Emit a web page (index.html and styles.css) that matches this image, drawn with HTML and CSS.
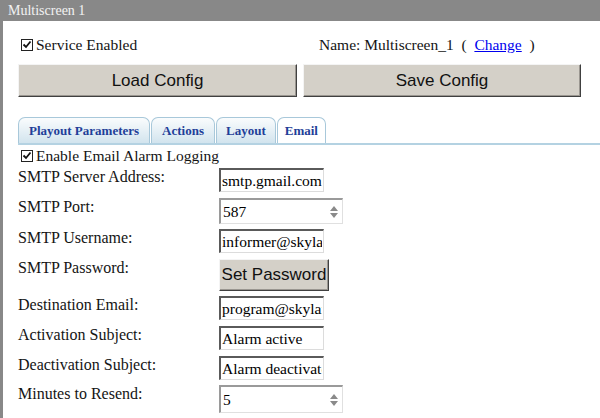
FILE: index.html
```html
<!DOCTYPE html>
<html lang="en">
<head>
    <meta charset="UTF-8">
    <title>Multiscreen 1</title>
    <link rel="stylesheet" href="styles.css">
</head>
<body>
    <div class="titlebar">Multiscreen 1</div>

    <div class="panel">
        <div class="top">
            <label class="check">
                <span class="box"><svg width="10" height="10" viewBox="0 0 10 10"><path d="M1.5 4.5 L4 7 L8.5 1.5" fill="none" stroke="#111" stroke-width="1.8"/></svg></span>
                Service Enabled
            </label>
            <div class="name">Name: Multiscreen_1 &nbsp;(&nbsp; <a href="#">Change</a> &nbsp;)</div>
            <button class="btn big">Load Config</button>
            <button class="btn big">Save Config</button>
        </div>

        <div class="tabs">
            <div class="tab">Playout Parameters</div>
            <div class="tab">Actions</div>
            <div class="tab narrow">Layout</div>
            <div class="tab active">Email</div>
        </div>

        <label class="check small">
            <span class="box"><svg width="10" height="10" viewBox="0 0 10 10"><path d="M1.5 4.5 L4 7 L8.5 1.5" fill="none" stroke="#111" stroke-width="1.8"/></svg></span>
            Enable Email Alarm Logging
        </label>

        <div class="form">
            <label for="server">SMTP Server Address:</label>
            <input type="text" id="server" value="smtp.gmail.com">

            <label>SMTP Port:</label>
            <div class="spin">
                <span>587</span>
                <svg width="8" height="12" viewBox="0 0 8 12"><path d="M4 0 L8 5 L0 5 Z M0 7 L8 7 L4 12 Z" fill="#8a8a8a"/></svg>
            </div>

            <label for="user">SMTP Username:</label>
            <input type="text" id="user" value="informer@skylark.tv">

            <label>SMTP Password:</label>
            <div><button class="btn pass">Set Password</button></div>

            <label for="dest">Destination Email:</label>
            <input type="text" id="dest" value="program@skylark.tv">

            <label for="act">Activation Subject:</label>
            <input type="text" id="act" value="Alarm active">

            <label for="deact">Deactivation Subject:</label>
            <input type="text" id="deact" value="Alarm deactivated">

            <label>Minutes to Resend:</label>
            <div class="spin tall">
                <span>5</span>
                <svg width="8" height="12" viewBox="0 0 8 12"><path d="M4 0 L8 5 L0 5 Z M0 7 L8 7 L4 12 Z" fill="#8a8a8a"/></svg>
            </div>
        </div>
    </div>
</body>
</html>
```

FILE: styles.css
```css
body {
    margin: 0;
    font-family: "Liberation Serif", serif;
    font-size: 15.5px;
    color: #141414;
    background: #fff;
}

.titlebar {
    height: 21px;
    line-height: 21px;
    padding-left: 8px;
    background-color: #888;
    color: #f2f2f2;
    font-size: 14px;
}

.panel {
    border-left: 3px solid #888;
    padding-left: 15px;
    height: 397px;
}

.top {
    display: grid;
    grid-template-columns: 279px 278px;
    grid-template-rows: 18px 33px;
    column-gap: 6px;
    row-gap: 10px;
    padding-top: 15px;
}

.check {
    display: flex;
    align-items: center;
    gap: 3px;
    padding-left: 3px;
    line-height: 18px;
}

.box {
    display: inline-flex;
    align-items: center;
    justify-content: center;
    width: 10px;
    height: 10px;
    border: 1px solid #222;
    background: #fff;
}

.name {
    padding-left: 16px;
    line-height: 18px;
}

.name a {
    color: #0000ee;
}

.btn {
    font-family: "Liberation Sans", Arial, sans-serif;
    font-size: 17px;
    color: #111;
    background-color: #d4d0c8;
    border: 1px solid;
    border-color: #f4f4f4 #404040 #404040 #f4f4f4;
    box-shadow: inset -1px -1px 0 #9a9690;
    padding: 0;
}

.big {
    height: 33px;
}

.tabs {
    display: flex;
    gap: 1px;
    margin-top: 20px;
    border-bottom: 2px solid #b4d2e2;
    height: 26px;
}

.tab {
    padding: 0 10px;
    border: 1px solid #a8c8da;
    border-bottom: none;
    border-radius: 7px 7px 0 0;
    background: linear-gradient(#fafcfd, #d2e4ee);
    color: #1f3f99;
    font-weight: bold;
    font-size: 13px;
    line-height: 25px;
}

.tab.narrow {
    padding: 0 9px;
}

.tab.active {
    background: #fff;
    padding: 0 7px;
}

.check.small {
    margin-top: 4px;
    line-height: 14px;
}

.form {
    display: grid;
    grid-template-columns: 201px auto;
    grid-template-rows: 25px 26px 25px 32px 25px 25px 24px 28px;
    row-gap: 5px;
    align-items: start;
    justify-items: start;
    margin-top: 5px;
}

.form label {
    font-size: 16px;
    line-height: 18px;
}

.form input,
.spin {
    box-sizing: border-box;
    height: 24px;
    width: 105px;
    border-style: solid;
    border-width: 2px 1px 1px 2px;
    border-color: #5a5a5a #dcdcdc #dcdcdc #5a5a5a;
    font-family: "Liberation Serif", serif;
    font-size: 15.5px;
    color: #000;
    padding: 0 1px;
    outline: none;
}

.spin {
    display: flex;
    align-items: center;
    justify-content: space-between;
    width: 124px;
    height: 26px;
    padding: 0 4px 0 2px;
    border-color: #9a9a9a #e0e0e0 #e0e0e0 #9a9a9a;
}

.spin.tall {
    height: 28px;
}

.pass {
    width: 110px;
    height: 32px;
}
```
